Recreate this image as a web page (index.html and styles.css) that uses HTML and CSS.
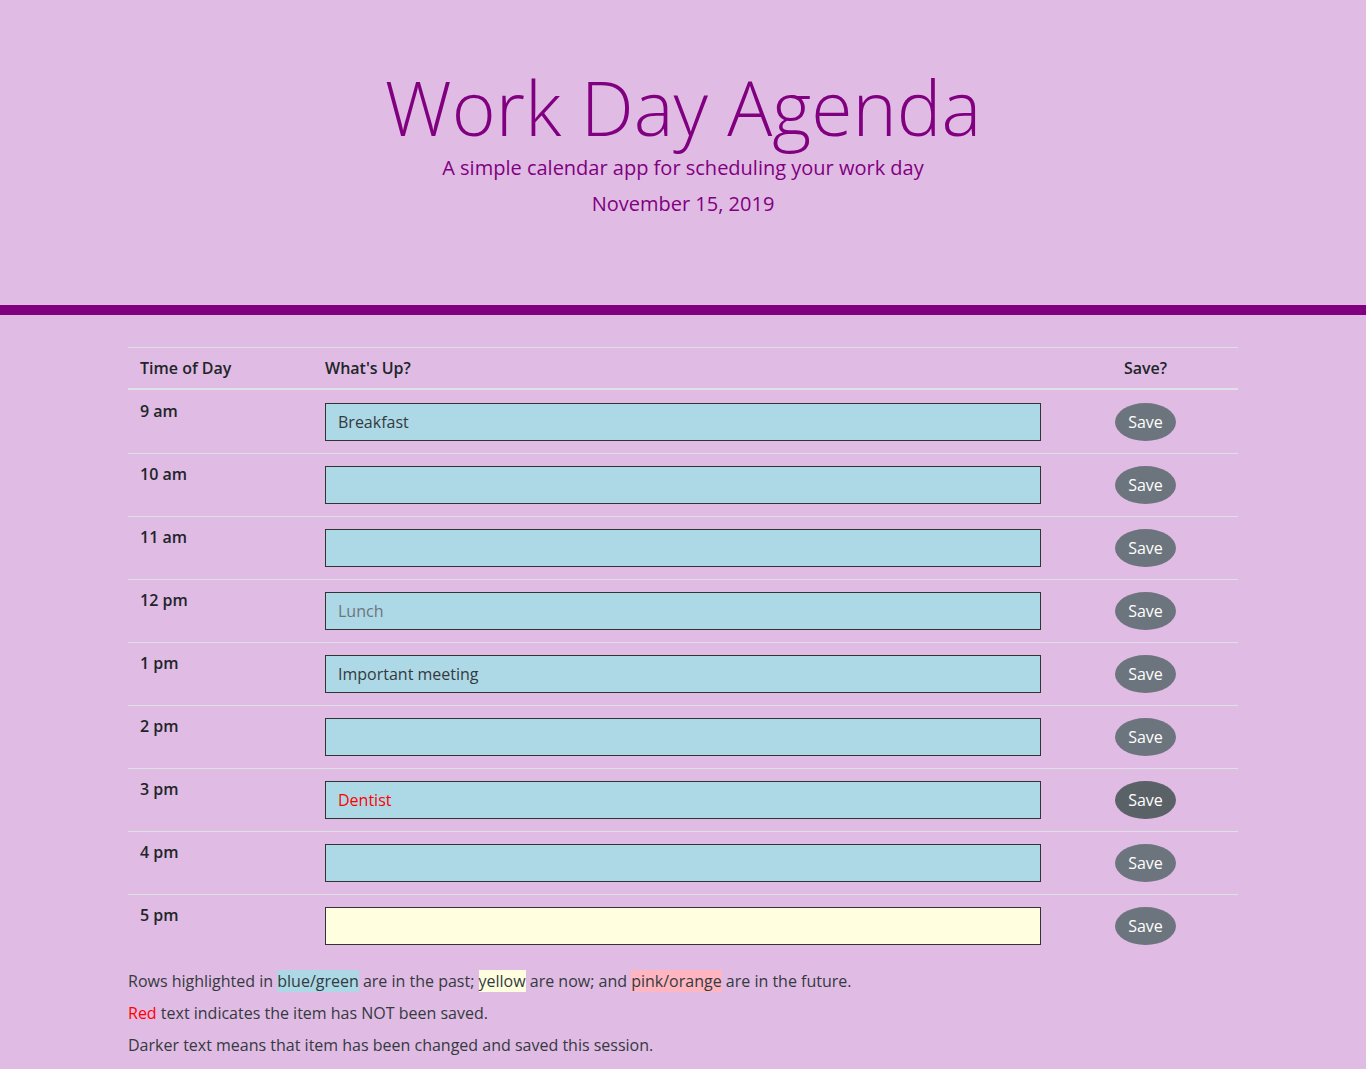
FILE: index.html
```html
<!DOCTYPE html>
<html lang="en">
<head>
<meta charset="utf-8">
<title>Work Day Agenda</title>
<link rel="stylesheet" href="styles.css">
</head>
<body>
<header class="jumbotron">
  <h1 class="title">Work Day Agenda</h1>
  <p class="lead">A simple calendar app for scheduling your work day</p>
  <p class="today">November 15, 2019</p>
</header>
<main class="container">
  <table class="agenda">
    <thead>
      <tr>
        <th class="col-time">Time of Day</th>
        <th class="col-what">What's Up?</th>
        <th class="col-save">Save?</th>
      </tr>
    </thead>
    <tbody>
      <tr><td class="hour">9 am</td><td><input class="entry past saved" type="text" value="Breakfast"></td><td class="col-save"><button class="save-btn">Save</button></td></tr>
      <tr><td class="hour">10 am</td><td><input class="entry past" type="text" value=""></td><td class="col-save"><button class="save-btn">Save</button></td></tr>
      <tr><td class="hour">11 am</td><td><input class="entry past" type="text" value=""></td><td class="col-save"><button class="save-btn">Save</button></td></tr>
      <tr><td class="hour">12 pm</td><td><input class="entry past stored" type="text" value="Lunch"></td><td class="col-save"><button class="save-btn">Save</button></td></tr>
      <tr><td class="hour">1 pm</td><td><input class="entry past saved" type="text" value="Important meeting"></td><td class="col-save"><button class="save-btn">Save</button></td></tr>
      <tr><td class="hour">2 pm</td><td><input class="entry past" type="text" value=""></td><td class="col-save"><button class="save-btn">Save</button></td></tr>
      <tr><td class="hour">3 pm</td><td><input class="entry past unsaved" type="text" value="Dentist"></td><td class="col-save"><button class="save-btn active">Save</button></td></tr>
      <tr><td class="hour">4 pm</td><td><input class="entry past" type="text" value=""></td><td class="col-save"><button class="save-btn">Save</button></td></tr>
      <tr><td class="hour">5 pm</td><td><input class="entry present" type="text" value=""></td><td class="col-save"><button class="save-btn">Save</button></td></tr>
    </tbody>
  </table>
  <p class="note">Rows highlighted in <span class="hl-past">blue/green</span> are in the past; <span class="hl-present">yellow</span> are now; and <span class="hl-future">pink/orange</span> are in the future.</p>
  <p class="note"><span class="red">Red</span> text indicates the item has NOT been saved.</p>
  <p class="note">Darker text means that item has been changed and saved this session.</p>
</main>
</body>
</html>
```
FILE: styles.css
```css
* { box-sizing: border-box; }
html, body {
  margin: 0;
  padding: 0;
}
body {
  background: #e0bbe4;
  font-family: "Open Sans", "Liberation Sans", sans-serif;
  font-size: 16px;
  line-height: 1.5;
  color: #212529;
}
.jumbotron {
  text-align: center;
  color: #800080;
  padding: 62px 0 86px;
  border-bottom: 10px solid #800080;
}
.title {
  margin: 0;
  font-size: 75px;
  font-weight: 300;
  line-height: 1.2;
}
.lead {
  margin: 1px 0 0;
  font-size: 20px;
  font-weight: 400;
  line-height: 1.5;
}
.today {
  margin: 6px 0 0;
  font-size: 20px;
  font-weight: 400;
  line-height: 1.5;
}
.container {
  width: 1140px;
  margin: 32px auto 0;
  padding: 0 15px;
}
.agenda {
  width: 100%;
  border-collapse: collapse;
  margin-bottom: 12px;
}
.agenda th {
  text-align: left;
  font-weight: 600;
  padding: 8px 12px;
  border-top: 1px solid #dee2e6;
  border-bottom: 2px solid #dee2e6;
  line-height: 24px;
}
.col-time { width: 185px; }
.col-save { width: 185px; text-align: center !important; }
.agenda td {
  padding: 12px;
  border-top: 1px solid #dee2e6;
  vertical-align: top;
}
.agenda tbody tr:first-child td { border-top: none; padding-top: 13px; }
.agenda td.hour { padding-top: 11px; }
.agenda tbody tr:first-child td.hour { padding-top: 12px; }
.hour {
  font-weight: 600;
  line-height: 18px;
}
.entry {
  display: block;
  width: 100%;
  height: 38px;
  border: 1px solid #333;
  padding: 0 12px;
  font-family: "Open Sans", "Liberation Sans", sans-serif;
  font-size: 16px;
  color: #495057;
  outline: none;
}
.entry.past { background: #add8e6; }
.entry.present { background: #ffffe0; }
.entry.future { background: #ffb6c1; }
.entry.saved { color: #343a40; }
.entry.stored { color: #6c757d; }
.entry.unsaved { color: #ff0000; }
.save-btn {
  width: 61px;
  height: 38px;
  border: none;
  border-radius: 50%;
  background: #6c757d;
  color: #fff;
  font-family: "Open Sans", "Liberation Sans", sans-serif;
  font-size: 16px;
  padding: 0;
  cursor: pointer;
}
.save-btn.active { background: #5a6268; }
.note {
  margin: 0 0 8px;
  line-height: 24px;
  color: #343a40;
}
.hl-past { background: #add8e6; }
.hl-present { background: #ffffe0; }
.hl-future { background: #ffb6c1; }
.red { color: #ff0000; }
```
